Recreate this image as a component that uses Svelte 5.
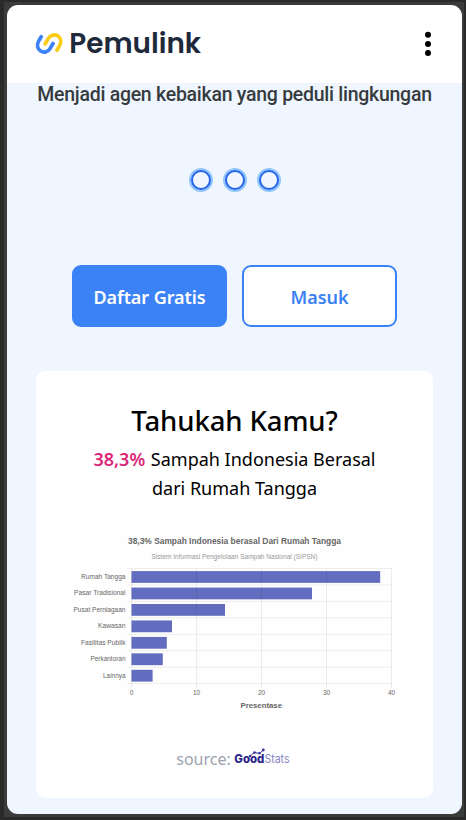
<script>
  const dots = [0, 1, 2];
  const rows = [
    { label: 'Rumah Tangga', end: 380.2, w: 44.5 },
    { label: 'Pasar Tradisional', end: 312, w: 51.5 },
    { label: 'Pusat Perniagaan', end: 225, w: 52 },
    { label: 'Kawasan', end: 172, w: 27.5 },
    { label: 'Fasilitas Publik', end: 166.8, w: 44.5 },
    { label: 'Perkantoran', end: 162.8, w: 35 },
    { label: 'Lainnya', end: 152.6, w: 22.5 }
  ];
  const left = 131.5;
  const top = 568.5;
  const step = 16.45;
  const ticks = [0, 10, 20, 30, 40];
</script>

<div class="frame">
  <div class="screen">
    <header>
      <svg class="brand" viewBox="35 23 170 42" width="170" height="42" role="img" aria-label="Pemulink">
        <g fill="none" stroke-width="3.7" stroke-linecap="round" stroke-linejoin="round">
          <path stroke="#3b82f6" d="M41.2 36.8L38.9 40.6C36.6 44.6 37.2 48.8 40.6 51C44 53.2 48 52 50 48.6L53 43.5" />
          <path stroke="#facc15" d="M45.2 43.9L48.2 38.7C50.3 35.1 54.6 33.8 58 35.9C61.2 38.1 61.4 42.4 59.4 45.9L56.9 50.2" />
        </g>
        <text x="69.3" y="52.7" textLength="131.8" lengthAdjust="spacingAndGlyphs">Pemulink</text>
      </svg>
      <svg class="menu" viewBox="0 0 8 26" width="8" height="26" role="img" aria-label="Menu">
        <circle cx="4" cy="3.7" r="3" /><circle cx="4" cy="12.9" r="3" /><circle cx="4" cy="21.9" r="3" />
      </svg>
    </header>
    <main>
      <p class="tagline">Menjadi agen kebaikan yang peduli lingkungan</p>
      <div class="dots">
        {#each dots as dot (dot)}<span class="dot"></span>{/each}
      </div>
      <div class="actions">
        <button class="primary">Daftar Gratis</button>
        <button class="outline">Masuk</button>
      </div>
      <section class="card">
        <h2>Tahukah Kamu?</h2>
        <p class="fact"><b>38,3%</b> Sampah Indonesia Berasal<br /><span>dari Rumah Tangga</span></p>
        <svg class="chart" viewBox="66 528 338 188" width="338" height="188">
          <rect x="66" y="528" width="338" height="188" fill="#fefefe" />
          <text class="title" x="128" y="543.5" textLength="213" lengthAdjust="spacingAndGlyphs">38,3% Sampah Indonesia berasal Dari Rumah Tangga</text>
          <text class="sub" x="151.5" y="559" textLength="166" lengthAdjust="spacingAndGlyphs">Sistem Informasi Pengelolaan Sampah Nasional (SIPSN)</text>
          {#each rows as row, i (row.label)}
            <text class="label" x={125.5 - row.w} y={top + i * step + 10.5} textLength={row.w} lengthAdjust="spacingAndGlyphs">{row.label}</text>
            <rect x={left} y={top + i * step + 2.6} width={row.end - left} height="11.8" fill="#636dc0" />
          {/each}
          <g stroke="#000" stroke-opacity=".07">
            {#each [0, 1, 2, 3, 4, 5, 6, 7] as n (n)}
              <line x1="127.5" x2="391.5" y1={top + n * step} y2={top + n * step} />
            {/each}
            {#each ticks as tick (tick)}
              <line x1={left + tick * 6.5} x2={left + tick * 6.5} y1={top} y2="688" />
            {/each}
          </g>
          {#each ticks as tick (tick)}
            <text class="tick" x={left + tick * 6.5} y="695.3">{tick}</text>
          {/each}
          <text class="axis" x="240.5" y="707.5" textLength="41.5" lengthAdjust="spacingAndGlyphs">Presentase</text>
        </svg>
        <div class="source">
          <span>source:</span>
          <svg viewBox="233 746 61 25" width="61" height="25">
            <text class="good" x="234.3" y="762.3" textLength="30" lengthAdjust="spacingAndGlyphs">Good</text>
            <text class="stats" x="264.5" y="762.3" textLength="25" lengthAdjust="spacingAndGlyphs">Stats</text>
            <path d="M250 755L254.5 751.4L259.5 752.5L263.5 748.9" fill="none" stroke="#39369a" stroke-width="1" />
            <g fill="#39369a"><circle cx="250" cy="755" r="1.2" /><circle cx="254.5" cy="751.6" r="1.3" /><circle cx="259.5" cy="752.3" r="1.3" /><circle cx="263.3" cy="749" r="1.4" /></g>
          </svg>
        </div>
      </section>
    </main>
  </div>
</div>

<style>
  :global(body) { margin: 0; background: #2b2b2b; }
  .frame {
    box-sizing: border-box; width: 466px; height: 820px; padding: 2px 2px 3px 4px;
    background: #2a2a2a; font-family: "Noto Sans", "Open Sans", sans-serif;
  }
  .screen {
    box-sizing: border-box; height: 815px; border: solid #3b3b3b; border-width: 3px 2px 3px 3px;
    background: #3b3b3b; display: flex; flex-direction: column;
  }
  header {
    box-sizing: border-box; height: 78px; flex: none; background: #fff; border-radius: 11px 11px 0 0;
    display: flex; justify-content: space-between; align-items: flex-start; padding: 18px 30px 0 28px;
  }
  .brand text { font: 600 27.5px Poppins, "Inter", sans-serif; fill: #1e293b; }
  .menu { margin-top: 8px; }
  main {
    flex: 1; background: #eff6ff; border-radius: 0 0 11px 11px; display: flex; flex-direction: column;
    align-items: center;
  }
  .tagline {
    margin: 0; padding-top: 1px; height: 22px; font: 500 19.5px/22px Roboto, sans-serif; color: #363b40;
    letter-spacing: -0.27px; white-space: nowrap;
  }
  .dots { display: flex; gap: 10px; margin: 62px 0 0; }
  .dot {
    box-sizing: border-box; width: 24px; height: 24px; border: 2px solid #93c5fd; border-radius: 50%;
    display: flex; align-items: center; justify-content: center; background: #bfdbfe;
  }
  .dot::before {
    content: ""; width: 16px; height: 16px; border: 2px solid #2563eb; border-radius: 50%; background: #eff6ff;
  }
  .actions { display: flex; gap: 15px; margin-top: 73px; }
  button {
    box-sizing: border-box; width: 155px; height: 62px; border: 2px solid #3b82f6; border-radius: 9px;
    padding: 2px 0 0; font: 600 18px "Noto Sans", "Open Sans", sans-serif; letter-spacing: -0.08px;
  }
  .primary { background: #3b82f6; color: #fff; }
  .outline { background: #fff; color: #3b82f6; }
  .card {
    box-sizing: border-box; width: 397px; height: 427px; margin-top: 44px; padding-top: 30px; border-radius: 9px;
    background: #fff; display: flex; flex-direction: column; align-items: center;
  }
  h2 { margin: 0; font-size: 27.5px; font-weight: 500; letter-spacing: -0.1px; line-height: 40px; color: #000; }
  .fact { margin: 4px 0 0; font-size: 18px; line-height: 29px; text-align: center; white-space: nowrap; color: #000; }
  .fact b { font-weight: 600; color: #db2777; margin-right: 1px; }
  .chart { margin-top: 25px; display: block; }
  .chart text { font-family: "Liberation Sans", sans-serif; fill: #666; }
  .chart .title { font-size: 8.7px; font-weight: 700; }
  .chart .sub { font-size: 6.4px; fill: #999; }
  .chart .label { font-size: 6.5px; }
  .chart .tick { font-size: 6.5px; text-anchor: middle; }
  .chart .axis { font-size: 7.5px; font-weight: 700; }
  .source { display: flex; align-items: center; gap: 2px; margin: 30px 0 0 1px; font-size: 16px; line-height: 26px; color: #9ca3af; }
  .good { font: 800 11.5px "Inter", sans-serif; fill: #29258b; }
  .stats { font: 400 11.5px "Inter", sans-serif; fill: #8583c4; }
</style>
